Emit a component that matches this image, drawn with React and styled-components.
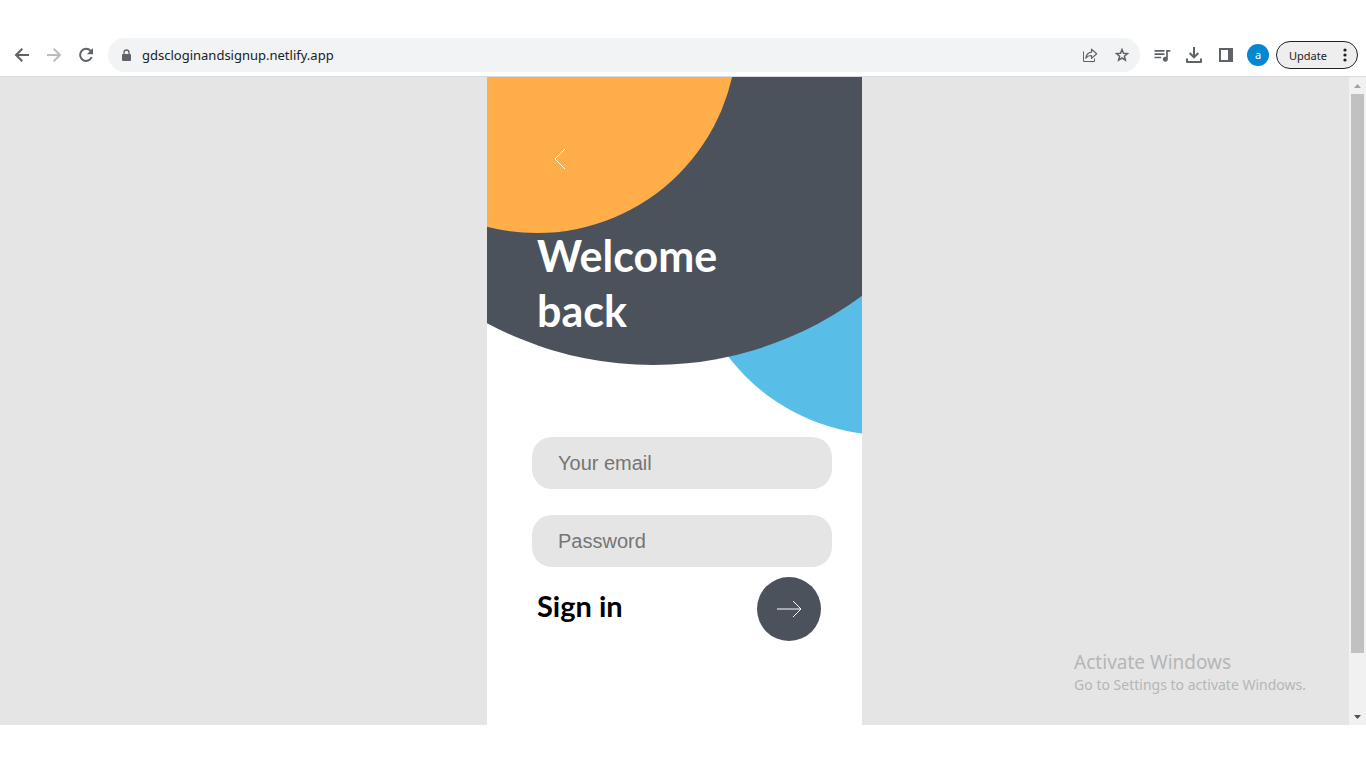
import React from "react";
import styled, { createGlobalStyle } from "styled-components";
import { MdQueueMusic } from "react-icons/md";

const GlobalStyle = createGlobalStyle`
  * {
    box-sizing: border-box;
  }
  body {
    margin: 0;
    background-color: #fff;
    font-family: "Noto Sans", "Open Sans", sans-serif;
  }
  h1,
  h2,
  p {
    margin: 0;
  }
  button {
    padding: 0;
    border: none;
    background: none;
    font-family: inherit;
    cursor: pointer;
  }
`;

const Window = styled.div`
  display: flex;
  flex-direction: column;
  min-height: 100vh;
  padding: 38px 0 43px;
`;
const Toolbar = styled.header`
  display: flex;
  align-items: center;
  gap: 8px;
  padding: 0 8px 4px;
  border-bottom: 1px solid #d9dbdc;
`;
const ToolGroup = styled.div`
  display: flex;
  align-items: center;
  gap: 4px;
`;
const ToolButton = styled.button`
  display: flex;
  align-items: center;
  justify-content: center;
  width: 28px;
  height: 28px;
  color: ${({ $faded }) => ($faded ? "#babcbe" : "#5f6368")};
`;
const AddressBar = styled.div`
  flex: 1;
  display: flex;
  align-items: center;
  height: 34px;
  padding: 0 4px 0 12px;
  border-radius: 17px;
  background-color: #f1f3f4;
  color: #5f6368;
`;
const AddressInput = styled.input`
  flex: 1;
  min-width: 0;
  padding: 0 9px;
  border: none;
  outline: none;
  background: none;
  color: #202124;
  font-family: inherit;
  font-size: 13px;
`;
const Avatar = styled.span`
  display: flex;
  align-items: center;
  justify-content: center;
  width: 22px;
  height: 22px;
  border-radius: 50%;
  background-color: #0288d1;
  color: #fff;
  font-size: 11px;
  line-height: 22px;
`;
const UpdateButton = styled.button`
  display: flex;
  align-items: center;
  justify-content: space-between;
  width: 82px;
  height: 28px;
  padding: 0 10px 0 12px;
  border: 1px solid #202124;
  border-radius: 14px;
  background-color: #eeeeee;
  color: #202124;
  font-size: 11px;
`;

const Viewport = styled.div`
  flex: 1;
  display: flex;
  position: relative;
`;
const Page = styled.main`
  flex: 1;
  display: flex;
  justify-content: center;
  background-color: #e5e5e5;
`;
const Card = styled.section`
  position: relative;
  width: 375px;
  overflow: hidden;
  background-color: #fff;
`;
const Circle = styled.div`
  position: absolute;
  top: ${({ $top }) => $top}px;
  left: ${({ $left }) => $left}px;
  width: ${({ $size }) => $size}px;
  height: ${({ $size }) => $size}px;
  border-radius: 50%;
  background-color: ${({ $color }) => $color};
`;
const Hero = styled.div`
  position: relative;
  height: 360px;
  padding: 66px 50px 0;
`;
const BackButton = styled.button`
  display: flex;
  align-items: center;
  justify-content: center;
  width: 46px;
  height: 32px;
  margin-bottom: 53px;
  color: #fff;
`;
const Title = styled.h1`
  width: 200px;
  color: #fff;
  font-family: Lato, sans-serif;
  font-size: 43px;
  font-weight: 700;
  line-height: 55px;
`;
const Form = styled.form`
  position: relative;
  display: flex;
  flex-direction: column;
  gap: 26px;
  padding: 0 30px 0 45px;
`;
const Field = styled.input`
  width: 100%;
  height: 52px;
  padding: 0 26px;
  border: none;
  border-radius: 20px;
  outline: none;
  background-color: #e5e5e5;
  font-family: "Liberation Sans", sans-serif;
  font-size: 20px;
  &::placeholder {
    color: #757575;
  }
`;
const SubmitRow = styled.div`
  display: flex;
  align-items: center;
  justify-content: space-between;
  margin-top: -16px;
  padding: 0 11px 0 5px;
`;
const SubmitLabel = styled.h2`
  color: #000;
  font-family: Lato, sans-serif;
  font-size: 29px;
  font-weight: 700;
  line-height: 32px;
  padding-bottom: 6px;
`;
const SubmitButton = styled.button`
  display: flex;
  align-items: center;
  justify-content: center;
  width: 64px;
  height: 64px;
  border-radius: 50%;
  background-color: #4c525c;
  color: #fff;
`;

const Scrollbar = styled.div`
  display: flex;
  flex-direction: column;
  align-items: center;
  width: 17px;
  background-color: #f1f1f1;
`;
const ScrollButton = styled.button`
  display: flex;
  align-items: center;
  justify-content: center;
  width: 17px;
  height: 17px;
  color: ${({ $faded }) => ($faded ? "#a3a3a3" : "#505050")};
`;
const ScrollTrack = styled.div`
  flex: 1;
  width: 13px;
`;
const ScrollThumb = styled.div`
  height: 91%;
  background-color: #c1c1c1;
`;
const Watermark = styled.div`
  position: absolute;
  right: 60px;
  bottom: 30px;
  color: #b6b6b6;
`;
const WatermarkTitle = styled.p`
  font-size: 19px;
  line-height: 26px;
`;
const WatermarkText = styled.p`
  font-size: 14px;
  line-height: 20px;
`;

const ArrowLeftIcon = () => (
  <svg width="16" height="16" viewBox="0 0 16 16" fill="none" stroke="currentColor" strokeWidth="2">
    <path d="M15 8H2.500M8.300 1.700 2 8l6.300 6.300" />
  </svg>
);

const ArrowRightIcon = () => (
  <svg width="16" height="16" viewBox="0 0 16 16" fill="none" stroke="currentColor" strokeWidth="2">
    <path d="M1 8h12.500M7.700 1.700 14 8l-6.300 6.300" />
  </svg>
);

const ReloadIcon = () => (
  <svg width="16" height="16" viewBox="0 0 16 16">
    <path
      d="M12.600 3.900A6 6 0 1 0 13.700 10"
      fill="none"
      stroke="currentColor"
      strokeWidth="2"
    />
    <path d="M15 1v6.200H8.800z" fill="currentColor" />
  </svg>
);

const LockIcon = () => (
  <svg width="13" height="13" viewBox="0 0 13 13">
    <rect x="2" y="5" width="9" height="7" rx="1" fill="currentColor" />
    <path
      d="M4 5.500V3.500a2.500 2.500 0 0 1 5 0v2"
      fill="none"
      stroke="currentColor"
      strokeWidth="1.300"
    />
  </svg>
);

const ShareIcon = () => (
  <svg width="16" height="16" viewBox="0 0 16 16" fill="none" stroke="currentColor">
    <path d="M1.500 4.500v10h11v-3" />
    <path
      d="M9.500 2.200v2.900C6 5.600 4.200 8 3.800 11.200c1.400-1.900 3.200-2.700 5.700-2.700v2.900l5.200-4.600z"
      strokeWidth="1.200"
      strokeLinejoin="round"
    />
  </svg>
);

const StarIcon = () => (
  <svg width="16" height="16" viewBox="0 0 16 16" fill="none" stroke="currentColor" strokeWidth="1.500">
    <path d="M8 2.600l1.500 3.700 4 .3-3.100 2.600 1 3.900L8 11l-3.400 2.100 1-3.900-3.100-2.600 4-.3z" />
  </svg>
);

const DownloadIcon = () => (
  <svg width="16" height="16" viewBox="0 0 16 16" fill="none" stroke="currentColor" strokeWidth="2">
    <path d="M8 0v10M3.700 6 8 10.300 12.300 6" />
    <path d="M1 11.500V15h14v-3.500" strokeLinejoin="round" />
  </svg>
);

const SidePanelIcon = () => (
  <svg width="14" height="14" viewBox="0 0 14 14" fill="currentColor">
    <path fillRule="evenodd" d="M0 0h14v14H0zM2 2v10h7V2z" />
  </svg>
);

const DotsIcon = () => (
  <svg width="4" height="14" viewBox="0 0 4 14" fill="currentColor">
    <circle cx="2" cy="2" r="1.600" />
    <circle cx="2" cy="7" r="1.600" />
    <circle cx="2" cy="12" r="1.600" />
  </svg>
);

const App = () => {
  return (
    <Window>
      <GlobalStyle />
      <Toolbar>
        <ToolGroup>
          <ToolButton aria-label="Back">
            <ArrowLeftIcon />
          </ToolButton>
          <ToolButton aria-label="Forward" $faded>
            <ArrowRightIcon />
          </ToolButton>
          <ToolButton aria-label="Reload">
            <ReloadIcon />
          </ToolButton>
        </ToolGroup>
        <AddressBar>
          <LockIcon />
          <AddressInput
            aria-label="Address"
            defaultValue="gdscloginandsignup.netlify.app"
          />
          <ToolGroup>
            <ToolButton aria-label="Share">
              <ShareIcon />
            </ToolButton>
            <ToolButton aria-label="Bookmark">
              <StarIcon />
            </ToolButton>
          </ToolGroup>
        </AddressBar>
        <ToolGroup>
          <ToolButton aria-label="Media">
            <MdQueueMusic size={20} />
          </ToolButton>
          <ToolButton aria-label="Downloads">
            <DownloadIcon />
          </ToolButton>
          <ToolButton aria-label="Side panel">
            <SidePanelIcon />
          </ToolButton>
          <ToolButton aria-label="Profile">
            <Avatar>a</Avatar>
          </ToolButton>
          <UpdateButton>
            Update
            <DotsIcon />
          </UpdateButton>
        </ToolGroup>
      </Toolbar>
      <Viewport>
        <Page>
          <Card>
            <Circle $top={-42} $left={200} $size={400} $color="#58bee7" />
            <Circle $top={-412} $left={-184} $size={700} $color="#4c525c" />
            <Circle $top={-244} $left={-150} $size={400} $color="#ffae49" />
            <Hero>
              <BackButton aria-label="Go back">
                <svg width="12" height="22" viewBox="0 0 12 22" fill="none" stroke="currentColor">
                  <path d="M11 1 1 11l10 10" />
                </svg>
              </BackButton>
              <Title>Welcome back</Title>
            </Hero>
            <Form onSubmit={(e) => e.preventDefault()}>
              <Field type="email" placeholder="Your email" aria-label="Your email" />
              <Field type="password" placeholder="Password" aria-label="Password" />
              <SubmitRow>
                <SubmitLabel id="submit-label">Sign in</SubmitLabel>
                <SubmitButton type="submit" aria-labelledby="submit-label">
                  <svg width="26" height="18" viewBox="0 0 26 18" fill="none" stroke="currentColor">
                    <path d="M1 9h24M17 1l8 8-8 8" />
                  </svg>
                </SubmitButton>
              </SubmitRow>
            </Form>
          </Card>
        </Page>
        <Scrollbar>
          <ScrollButton aria-label="Scroll up" $faded>
            <svg width="7" height="4" viewBox="0 0 7 4" fill="currentColor">
              <path d="M0 4 3.500 0 7 4z" />
            </svg>
          </ScrollButton>
          <ScrollTrack>
            <ScrollThumb />
          </ScrollTrack>
          <ScrollButton aria-label="Scroll down">
            <svg width="7" height="4" viewBox="0 0 7 4" fill="currentColor">
              <path d="M0 0h7L3.500 4z" />
            </svg>
          </ScrollButton>
        </Scrollbar>
        <Watermark>
          <WatermarkTitle>Activate Windows</WatermarkTitle>
          <WatermarkText>Go to Settings to activate Windows.</WatermarkText>
        </Watermark>
      </Viewport>
    </Window>
  );
};

export default App;
